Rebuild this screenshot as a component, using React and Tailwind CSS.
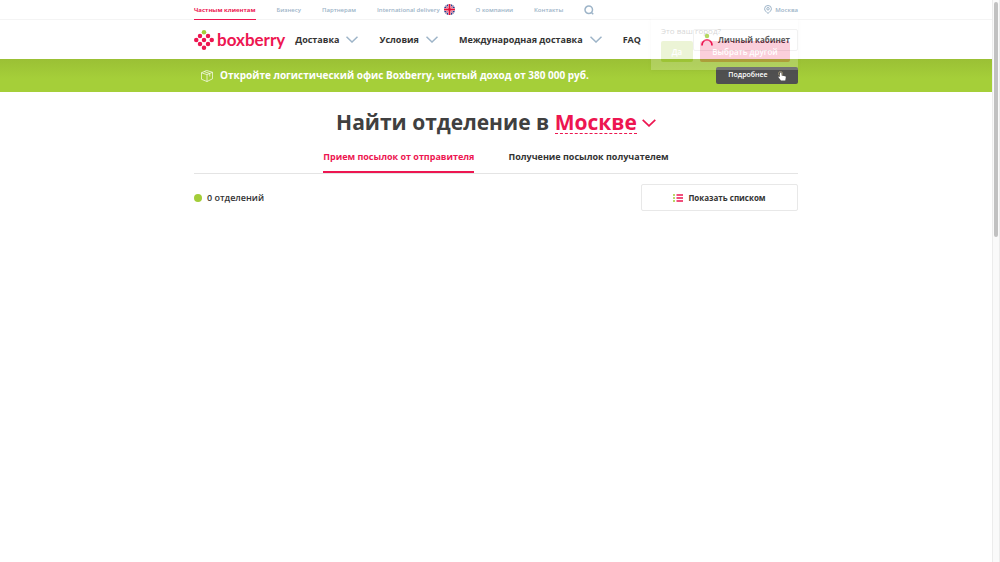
import React from "react";

const topLinks = ["Бизнесу", "Партнерам"];

function Flag() {
  return (
    <svg viewBox="0 0 22 22" className="size-[11px]" aria-hidden="true">
      <defs>
        <clipPath id="round"><circle cx="11" cy="11" r="11" /></clipPath>
      </defs>
      <g clipPath="url(#round)">
        <rect width="22" height="22" fill="#24408e" />
        <path d="M0 0 22 22M22 0 0 22" stroke="#fff" strokeWidth="3" />
        <path d="M0 0 22 22M22 0 0 22" stroke="#e0103a" strokeWidth="1.2" />
        <path d="M11 0V22M0 11H22" stroke="#fff" strokeWidth="6" />
        <path d="M11 0V22M0 11H22" stroke="#e0103a" strokeWidth="4" />
      </g>
    </svg>
  );
}

function Chevron({ className }) {
  return (
    <svg viewBox="0 0 24 14" fill="none" stroke="currentColor" className={className} aria-hidden="true">
      <path d="M1 1.5 12 12 23 1.5" strokeWidth="3" />
    </svg>
  );
}

const berries = [[12, 12], [28, 12], [4.5, 20], [20, 20], [35.5, 20], [12, 28], [28, 28], [20, 35.5]];

function LogoMark() {
  return (
    <svg viewBox="0 0 40 40" className="size-5" aria-hidden="true">
      <circle cx="20" cy="4.5" r="4.5" fill="#a3cd39" />
      {berries.map(([x, y]) => (
        <circle key={x + "-" + y} cx={x} cy={y} r="4.5" fill="#ed1651" />
      ))}
    </svg>
  );
}

function NavItem({ label }) {
  return (
    <button type="button" className="flex items-center gap-[7px]">
      {label}
      <Chevron className="h-[7px] w-3 text-[#9db4c8]" />
    </button>
  );
}

export default function App() {
  return (
    <div className="flex min-h-screen bg-white font-['Open_Sans',sans-serif] text-[#333]">
      <div className="min-w-0 flex-1">
        <div className="border-b border-[#f4f4f4]">
          <div className="mx-auto flex h-[19px] max-w-[604px] items-center text-[6px] leading-[20px] font-semibold text-[#9db4c8]">
            <nav className="flex h-full flex-1 items-center gap-[21px]">
              <a href="#private" className="flex h-[20px] items-center self-start border-b border-b-[#ed1651] font-bold text-[#ed1651]">Частным клиентам</a>
              {topLinks.map((t) => <a key={t} href="#top">{t}</a>)}
              <a href="#intl" className="flex items-center gap-1">International delivery<Flag /></a>
              <a href="#about">О компании</a>
              <a href="#contacts">Контакты</a>
              <button type="button" aria-label="Поиск">
                <svg viewBox="0 0 20 20" fill="none" stroke="currentColor" strokeWidth="3" className="size-[10px]">
                  <circle cx="9.5" cy="9.5" r="7.5" /><path d="m14 14 4.5 4.5" />
                </svg>
              </button>
            </nav>
            <a href="#city" className="flex items-center gap-[3px]">
              <svg viewBox="0 0 16 18" fill="none" stroke="currentColor" strokeWidth="2" className="h-[9px] w-2" aria-hidden="true">
                <path d="M8 16.8C4.500 14 1.200 11 1.200 7.500a6.800 6.500 0 0 1 13.600 0C14.800 11 11.500 14 8 16.800Z" /><circle cx="8" cy="7.500" r="2.500" />
              </svg>
              Москва
            </a>
          </div>
        </div>

        <header className="relative mx-auto flex h-[39px] max-w-[604px] items-center text-[9px] font-bold">
          <a href="#home" className="mr-[10px] flex items-center gap-[3px] text-[#ed1651]">
            <LogoMark />
            <span className="font-['Lato',sans-serif] text-[17px] leading-5 font-bold">boxberry</span>
          </a>
          <nav className="flex flex-1 items-center gap-[21px]">
            <NavItem label="Доставка" />
            <NavItem label="Условия" />
            <NavItem label="Международная доставка" />
            <a href="#faq">FAQ</a>
          </nav>
          <button type="button" className="flex h-[22px] items-center gap-[5px] rounded-xs border border-[#eee] px-[7px] text-[8px]">
            <svg viewBox="0 0 24 28" className="h-[14px] w-3" aria-hidden="true">
              <circle cx="12" cy="6" r="4.500" fill="#a3cd39" />
              <path d="M2 25C2 10 22 10 22 25" fill="none" stroke="#ed1651" strokeWidth="3.500" />
            </svg>
            Личный кабинет
          </button>

          <div role="dialog" aria-label="Это ваш город?" className="absolute -top-px right-0 z-10 flex h-[51px] w-[147px] flex-col gap-[3px] bg-white pt-1 pl-[10px] opacity-20 shadow-sm">
            <p className="text-[8px] leading-[15px] font-normal">Это ваш город?</p>
            <div className="flex gap-[7px] text-[8px] font-semibold text-white">
              <button type="button" className="h-[21px] w-8 rounded-xs bg-[#a3cd39]">Да</button>
              <button type="button" className="h-[21px] w-[90px] shrink-0 rounded-xs bg-[#ed1651]">Выбрать другой</button>
            </div>
          </div>
        </header>

        <section className="bg-linear-to-b from-[#9bc035] to-[#a5cf39] to-60%">
          <div className="mx-auto flex h-[33px] max-w-[604px] items-center pl-[7px] text-[10px] font-bold text-white">
            <svg viewBox="0 0 26 26" fill="none" stroke="currentColor" strokeWidth="1.5" className="mr-[7px] size-3" aria-hidden="true">
              <path d="M1 6 12 1l13 4v14l-12 6-12-5ZM1 6l12 4 12-5M13 10v15M7 3.500l12 4V14" />
            </svg>
            <p className="flex-1">Откройте логистический офис Boxberry, чистый доход от 380 000 руб.</p>
            <a href="#more" className="flex h-[17px] w-[82px] items-center justify-center gap-[10px] rounded-xs bg-[#505050] text-[7px] font-semibold">
              Подробнее
              <svg viewBox="0 0 16 20" className="h-[10px] w-2" aria-hidden="true">
                <circle cx="5" cy="5" r="4" fill="none" stroke="#a99c78" strokeWidth="1.500" />
                <path d="M4 4.500a1.500 1.500 0 0 1 3 0V9l7 1.500c1.500.3 1.800 1 1.600 2L14.500 19H6L1 12.500c-.5-1 .5-2 1.500-1.500L4 12Z" fill="#fff" />
              </svg>
            </a>
          </div>
        </section>

        <main className="mx-auto max-w-[604px]">
          <h1 className="flex items-center justify-center pt-[14px] text-[21px] leading-8 font-bold text-[#404040]">
            Найти отделение в&nbsp;
            <button type="button" className="flex items-center gap-[5px] text-[#ed1651]">
              <span className="border-b border-dashed border-[#ed1651] leading-[22px]">Москве</span>
              <Chevron className="mt-[2px] h-2 w-[14px]" />
            </button>
          </h1>
          <div role="tablist" className="flex justify-center gap-[34px] border-b border-[#e4e4e4] text-[9px] font-bold">
            <button type="button" role="tab" aria-selected="true" className="h-[35px] border-b-2 border-[#ed1651] pt-1 text-[#ed1651]">Прием посылок от отправителя</button>
            <button type="button" role="tab" aria-selected="false" className="h-[35px] border-b-2 border-transparent pt-1">Получение посылок получателем</button>
          </div>
          <div className="flex items-center justify-between pt-[10px]">
            <p className="flex items-center gap-[5px] text-[9px] font-semibold"><span className="size-2 rounded-full bg-[#a3cd39]" />0 отделений</p>
            <button type="button" className="flex h-[27px] w-[157px] items-center justify-center gap-[5px] rounded-xs border border-[#e8e8e8] text-[8px] font-bold">
              <svg viewBox="0 0 20 16" className="h-2 w-[10px]" aria-hidden="true">
                <path d="M0 2H4M0 8H4M0 14H4" stroke="#a3cd39" strokeWidth="3" />
                <path d="M7 2H20M7 8H20M7 14H20" stroke="#ed1651" strokeWidth="3" />
              </svg>
              Показать списком
            </button>
          </div>
        </main>
      </div>
      <aside aria-hidden="true" className="w-2 border-x border-[#ececec] bg-[#fafafa] px-px pt-[2px]">
        <div className="h-[235px] rounded-full bg-[#c1c1c1]" />
      </aside>
    </div>
  );
}
